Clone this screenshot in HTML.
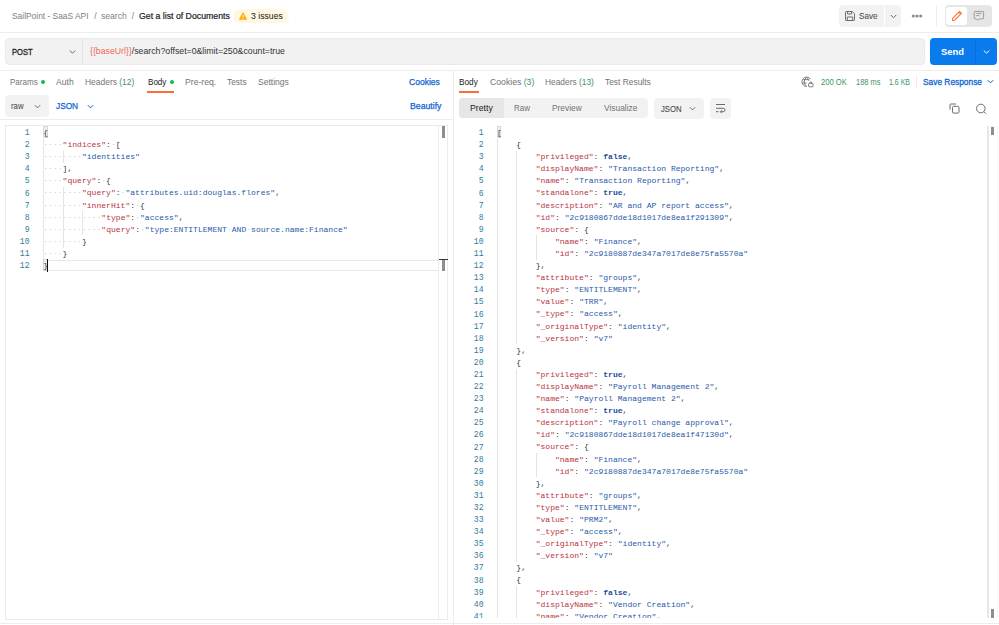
<!DOCTYPE html>
<html><head><meta charset="utf-8">
<style>
*{box-sizing:border-box;margin:0;padding:0}
html,body{width:999px;height:625px;overflow:hidden;background:#fff;font-family:"Liberation Sans",sans-serif;color:#212121}
.a{position:absolute}
.t{position:absolute;white-space:nowrap;line-height:1}
.vl{position:absolute;width:1px;background:#ededed}
.code{font-family:"Liberation Mono",monospace;font-size:8.05px;line-height:12.1px;white-space:pre}
.ln{position:absolute;white-space:pre;text-align:right;color:#2c7e9c;font-family:"Liberation Mono",monospace;font-size:9px;line-height:12.1px;transform:scaleX(0.9);transform-origin:100% 0;padding-top:0.6px}
.k{color:#b83340}
.s{color:#2a5aa8}
.b{color:#1d4f9c;font-weight:bold}
.p{color:#3a3a3a}
i{font-style:normal;color:#c9c9c9}
</style></head><body>
<div class="t" style="left:12.30px;top:11.72px;font-size:8.6px;color:#808080;transform:scaleX(0.9767);transform-origin:0 0">SailPoint - SaaS API</div>
<div class="t" style="left:94.30px;top:11.72px;font-size:8.6px;color:#808080">/</div>
<div class="t" style="left:100.60px;top:11.72px;font-size:8.6px;color:#808080;transform:scaleX(0.9994);transform-origin:0 0">search</div>
<div class="t" style="left:131.80px;top:11.72px;font-size:8.6px;color:#808080">/</div>
<div class="t" style="left:138.50px;top:11.72px;font-size:8.6px;color:#212121;-webkit-text-stroke:0.2px #212121;transform:scaleX(1.0166);transform-origin:0 0">Get a list of Documents</div>
<div class="a" style="left:233px;top:9.2px;width:55.5px;height:13.6px;background:#fff7e2;border-radius:7px"></div>
<svg class="a" style="left:239px;top:11.5px" width="8" height="8" viewBox="0 0 8 8"><path d="M4 0.6 L7.7 7.4 L0.3 7.4 Z" fill="#ffab00" stroke="#ffab00" stroke-width="0.6" stroke-linejoin="round"/><rect x="3.55" y="2.9" width="0.9" height="2.4" fill="#fff"/><rect x="3.55" y="5.9" width="0.9" height="0.9" fill="#fff"/></svg>
<div class="t" style="left:250.50px;top:11.72px;font-size:8.6px;color:#2a2a2a;-webkit-text-stroke:0.06px #2a2a2a;transform:scaleX(1.0087);transform-origin:0 0">3 issues</div>
<div class="a" style="left:838.5px;top:5px;width:45.5px;height:21.5px;background:#f2f2f2;border-radius:4px 0 0 4px"></div>
<div class="a" style="left:885px;top:5px;width:15.5px;height:21.5px;background:#f2f2f2;border-radius:0 4px 4px 0"></div>
<div class="t" style="left:858.50px;top:11.85px;font-size:8.8px;color:#555555;-webkit-text-stroke:0.12px #555555;transform:scaleX(0.9277);transform-origin:0 0">Save</div>
<div class="a" style="left:936px;top:5px;width:1px;height:21.5px;background:#ededed"></div>
<div class="a" style="left:944.5px;top:5px;width:47px;height:21.5px;background:#e6e6e6;border-radius:4px"></div>
<div class="a" style="left:945.8px;top:6.5px;width:21.5px;height:18.6px;background:#ffffff;border-radius:3px"></div>
<div class="a" style="left:0px;top:32px;width:999px;height:1px;background:#ededed"></div>
<div class="a" style="left:5px;top:38px;width:919.5px;height:26.5px;background:#f2f2f2;border-radius:4px;border:1px solid #e9e9e9"></div>
<div class="a" style="left:82px;top:39px;width:1px;height:24.5px;background:#e3e3e3"></div>
<div class="t" style="left:12.30px;top:47.72px;font-size:8.6px;color:#212121;-webkit-text-stroke:0.3px #212121;transform:scaleX(0.8820);transform-origin:0 0">POST</div>
<div class="t" style="left:89.70px;top:47.32px;font-size:8.6px;color:#333333;transform:scaleX(1.0173);transform-origin:0 0"><span style="color:#ee6a55">{{baseUrl}}</span>/search?offset=0&amp;limit=250&amp;count=true</div>
<div class="a" style="left:930px;top:38px;width:67px;height:27px;background:#097bed;border-radius:4px"></div>
<div class="a" style="left:975px;top:38px;width:1px;height:27px;background:#0a70dc"></div>
<div class="t" style="left:941.00px;top:47.07px;font-size:9.6px;color:#ffffff;font-weight:bold;transform:scaleX(0.9748);transform-origin:0 0">Send</div>
<div class="a" style="left:0px;top:70px;width:999px;height:1px;background:#ededed"></div>
<div class="t" style="left:10.10px;top:77.83px;font-size:9.3px;color:#737373;transform:scaleX(0.8647);transform-origin:0 0">Params</div>
<div class="a" style="left:41px;top:79.8px;width:4px;height:4px;border-radius:50%;background:#0cbb52"></div>
<div class="t" style="left:56.10px;top:77.83px;font-size:9.3px;color:#737373;transform:scaleX(0.9285);transform-origin:0 0">Auth</div>
<div class="t" style="left:84.60px;top:77.83px;font-size:9.3px;color:#737373;transform:scaleX(0.9084);transform-origin:0 0">Headers <span style="color:#3a9566">(12)</span></div>
<div class="t" style="left:147.70px;top:77.83px;font-size:9.3px;color:#212121;transform:scaleX(0.8681);transform-origin:0 0">Body</div>
<div class="a" style="left:170.3px;top:79.8px;width:4px;height:4px;border-radius:50%;background:#0cbb52"></div>
<div class="t" style="left:184.60px;top:77.83px;font-size:9.3px;color:#737373;transform:scaleX(0.9303);transform-origin:0 0">Pre-req.</div>
<div class="t" style="left:227.00px;top:77.83px;font-size:9.3px;color:#737373;transform:scaleX(0.9025);transform-origin:0 0">Tests</div>
<div class="t" style="left:257.80px;top:77.83px;font-size:9.3px;color:#737373;transform:scaleX(0.9192);transform-origin:0 0">Settings</div>
<div class="a" style="left:147px;top:91px;width:27px;height:2px;background:#ff6c37"></div>
<div class="t" style="left:408.80px;top:77.83px;font-size:9.3px;color:#0b64d0;-webkit-text-stroke:0.25px #0b64d0;transform:scaleX(0.9193);transform-origin:0 0">Cookies</div>
<div class="a" style="left:5px;top:95px;width:44px;height:21.5px;background:#f2f2f2;border-radius:4px"></div>
<div class="t" style="left:11.20px;top:102.12px;font-size:8.6px;color:#3a3a3a;transform:scaleX(0.9084);transform-origin:0 0">raw</div>
<div class="t" style="left:55.90px;top:101.83px;font-size:9.3px;color:#0b64d0;-webkit-text-stroke:0.25px #0b64d0;transform:scaleX(0.8887);transform-origin:0 0">JSON</div>
<div class="t" style="left:409.70px;top:101.63px;font-size:9.3px;color:#0b64d0;-webkit-text-stroke:0.25px #0b64d0;transform:scaleX(0.9368);transform-origin:0 0">Beautify</div>
<div class="a" style="left:0px;top:119.4px;width:453px;height:1px;background:#ededed"></div>
<div class="a" style="left:453px;top:70px;width:1px;height:555px;background:#ededed"></div>
<div class="t" style="left:459.30px;top:77.83px;font-size:9.3px;color:#212121;transform:scaleX(0.8866);transform-origin:0 0">Body</div>
<div class="t" style="left:489.50px;top:77.83px;font-size:9.3px;color:#737373;transform:scaleX(0.9318);transform-origin:0 0">Cookies <span style="color:#3a9566">(3)</span></div>
<div class="t" style="left:544.90px;top:77.83px;font-size:9.3px;color:#737373;transform:scaleX(0.9010);transform-origin:0 0">Headers <span style="color:#3a9566">(13)</span></div>
<div class="t" style="left:605.30px;top:77.83px;font-size:9.3px;color:#737373;transform:scaleX(0.9022);transform-origin:0 0">Test Results</div>
<div class="a" style="left:459px;top:91px;width:20px;height:2px;background:#ff6c37"></div>
<div class="t" style="left:821.00px;top:77.83px;font-size:9.3px;color:#3a9566;transform:scaleX(0.8198);transform-origin:0 0">200 OK</div>
<div class="t" style="left:855.70px;top:77.83px;font-size:9.3px;color:#3a9566;transform:scaleX(0.8009);transform-origin:0 0">188 ms</div>
<div class="t" style="left:889.00px;top:77.83px;font-size:9.3px;color:#3a9566;transform:scaleX(0.7507);transform-origin:0 0">1.6 KB</div>
<div class="a" style="left:916px;top:75px;width:1px;height:13px;background:#ededed"></div>
<div class="t" style="left:923.00px;top:77.83px;font-size:9.3px;color:#0b64d0;-webkit-text-stroke:0.3px #0b64d0;transform:scaleX(0.8982);transform-origin:0 0">Save Response</div>
<div class="a" style="left:459px;top:98px;width:189px;height:20px;background:#f2f2f2;border-radius:4px"></div>
<div class="a" style="left:459px;top:98px;width:44.5px;height:20px;background:#e6e6e6;border-radius:4px 0 0 4px"></div>
<div class="t" style="left:469.70px;top:104.23px;font-size:9.3px;color:#212121;transform:scaleX(0.9378);transform-origin:0 0">Pretty</div>
<div class="t" style="left:514.40px;top:104.23px;font-size:9.3px;color:#737373;transform:scaleX(0.8579);transform-origin:0 0">Raw</div>
<div class="t" style="left:552.30px;top:104.23px;font-size:9.3px;color:#737373;transform:scaleX(0.8995);transform-origin:0 0">Preview</div>
<div class="t" style="left:604.00px;top:104.23px;font-size:9.3px;color:#737373;transform:scaleX(0.9032);transform-origin:0 0">Visualize</div>
<div class="a" style="left:653.8px;top:98.2px;width:50.5px;height:21px;background:#f2f2f2;border-radius:4px"></div>
<div class="t" style="left:660.60px;top:104.53px;font-size:9.3px;color:#4a4a4a;-webkit-text-stroke:0.12px #4a4a4a;transform:scaleX(0.8264);transform-origin:0 0">JSON</div>
<div class="a" style="left:710.2px;top:98.2px;width:20.7px;height:21px;background:#f2f2f2;border-radius:4px"></div>
<!--ED-->
<div class="a" style="left:4.6px;top:124.8px;width:443.9px;height:494.9px;border:1px solid #ebebeb"></div>
<div class="a" style="left:437.9px;top:125.8px;width:10px;height:493px;border-left:1px solid #ebebeb"></div>
<div class="a" style="left:43.5px;top:259.5px;width:395px;height:11.5px;border-top:1px solid #e8e8e8;border-bottom:1px solid #e8e8e8"></div>
<div class="vl" style="left:43.4px;top:138.60px;height:121.00px;background:#e3e3e3"></div>
<div class="vl" style="left:62.7px;top:150.70px;height:12.10px;background:#e3e3e3"></div>
<div class="vl" style="left:62.7px;top:187.00px;height:60.50px;background:#e3e3e3"></div>
<div class="vl" style="left:82.0px;top:211.20px;height:24.20px;background:#e3e3e3"></div>
<div class="a" style="left:43.3px;top:126.3px;width:4.3px;height:12px;background:#eef2ee;border:1px solid #d6d6d6"></div>
<div class="a" style="left:43.3px;top:259.3px;width:4.3px;height:11.5px;background:#eef2ee;border:1px solid #d6d6d6"></div>
<div class="ln" style="left:5px;top:126.5px;width:24.5px">1
2
3
4
5
6
7
8
9
10
11
12</div>
<div class="a code ws-left" style="left:43.2px;top:127px"><span class="p">{</span>
<i>·</i><i>·</i><i>·</i><i>·</i><span class="k">&quot;indices&quot;</span><span class="p">:</span><i>·</i><span class="p">[</span>
<i>·</i><i>·</i><i>·</i><i>·</i><i>·</i><i>·</i><i>·</i><i>·</i><span class="s">&quot;identities&quot;</span>
<i>·</i><i>·</i><i>·</i><i>·</i><span class="p">]</span><span class="p">,</span>
<i>·</i><i>·</i><i>·</i><i>·</i><span class="k">&quot;query&quot;</span><span class="p">:</span><i>·</i><span class="p">{</span>
<i>·</i><i>·</i><i>·</i><i>·</i><i>·</i><i>·</i><i>·</i><i>·</i><span class="k">&quot;query&quot;</span><span class="p">:</span><i>·</i><span class="s">&quot;attributes.uid:douglas.flores&quot;</span><span class="p">,</span>
<i>·</i><i>·</i><i>·</i><i>·</i><i>·</i><i>·</i><i>·</i><i>·</i><span class="k">&quot;innerHit&quot;</span><span class="p">:</span><i>·</i><span class="p">{</span>
<i>·</i><i>·</i><i>·</i><i>·</i><i>·</i><i>·</i><i>·</i><i>·</i><i>·</i><i>·</i><i>·</i><i>·</i><span class="k">&quot;type&quot;</span><span class="p">:</span><i>·</i><span class="s">&quot;access&quot;</span><span class="p">,</span>
<i>·</i><i>·</i><i>·</i><i>·</i><i>·</i><i>·</i><i>·</i><i>·</i><i>·</i><i>·</i><i>·</i><i>·</i><span class="k">&quot;query&quot;</span><span class="p">:</span><i>·</i><span class="s">&quot;type:ENTITLEMENT<i>·</i>AND<i>·</i>source.name:Finance&quot;</span>
<i>·</i><i>·</i><i>·</i><i>·</i><i>·</i><i>·</i><i>·</i><i>·</i><span class="p">}</span>
<i>·</i><i>·</i><i>·</i><i>·</i><span class="p">}</span>
<span class="p">}</span></div>
<div class="a" style="left:47.2px;top:259px;width:1px;height:12.5px;background:#111"></div>
<div class="a" style="left:442px;top:126.3px;width:3px;height:11.6px;background:#8e8e8e"></div>
<div class="a" style="left:442px;top:260px;width:3px;height:11px;background:#8e8e8e"></div>
<div class="a" style="left:438.9px;top:259px;width:9px;height:1.3px;background:#333"></div>
<div class="a" style="left:987.4px;top:126px;width:1.3px;height:492px;background:#e6e6e6"></div>
<div class="a" style="left:991px;top:126.2px;width:3px;height:8.9px;background:#8e8e8e"></div>
<div class="a" style="left:987.5px;top:126px;width:10px;height:492px;border-right:1px solid #f6f6f6;border-top:1px solid #f6f6f6"></div>
<div class="a" style="left:991.2px;top:609px;width:3px;height:9px;background:#8e8e8e"></div>
<div class="a" style="left:455px;top:0;width:532px;height:618px;overflow:hidden"><div class="a" style="left:-455px;top:0;width:999px;height:625px">
<div class="vl" style="left:497.0px;top:138.60px;height:484.00px;background:#e3e3e3"></div>
<div class="vl" style="left:516.3px;top:150.70px;height:193.60px;background:#e3e3e3"></div>
<div class="vl" style="left:516.3px;top:368.50px;height:193.60px;background:#e3e3e3"></div>
<div class="vl" style="left:516.3px;top:586.30px;height:36.30px;background:#e3e3e3"></div>
<div class="vl" style="left:535.6px;top:235.40px;height:24.20px;background:#e3e3e3"></div>
<div class="vl" style="left:535.6px;top:453.20px;height:24.20px;background:#e3e3e3"></div>
<div class="a" style="left:496.9px;top:126.2px;width:4.6px;height:12px;background:#eef2ee;border:1px solid #d6d6d6"></div>
<div class="ln" style="left:455px;top:126.5px;width:28.5px">1
2
3
4
5
6
7
8
9
10
11
12
13
14
15
16
17
18
19
20
21
22
23
24
25
26
27
28
29
30
31
32
33
34
35
36
37
38
39
40
41</div>
<div class="a code" style="left:497px;top:127px"><span class="p">[</span>
    <span class="p">{</span>
        <span class="k">&quot;privileged&quot;</span><span class="p">:</span> <span class="b">false</span><span class="p">,</span>
        <span class="k">&quot;displayName&quot;</span><span class="p">:</span> <span class="s">&quot;Transaction Reporting&quot;</span><span class="p">,</span>
        <span class="k">&quot;name&quot;</span><span class="p">:</span> <span class="s">&quot;Transaction Reporting&quot;</span><span class="p">,</span>
        <span class="k">&quot;standalone&quot;</span><span class="p">:</span> <span class="b">true</span><span class="p">,</span>
        <span class="k">&quot;description&quot;</span><span class="p">:</span> <span class="s">&quot;AR and AP report access&quot;</span><span class="p">,</span>
        <span class="k">&quot;id&quot;</span><span class="p">:</span> <span class="s">&quot;2c9180867dde18d1017de8ea1f291309&quot;</span><span class="p">,</span>
        <span class="k">&quot;source&quot;</span><span class="p">:</span> <span class="p">{</span>
            <span class="k">&quot;name&quot;</span><span class="p">:</span> <span class="s">&quot;Finance&quot;</span><span class="p">,</span>
            <span class="k">&quot;id&quot;</span><span class="p">:</span> <span class="s">&quot;2c9180887de347a7017de8e75fa5570a&quot;</span>
        <span class="p">}</span><span class="p">,</span>
        <span class="k">&quot;attribute&quot;</span><span class="p">:</span> <span class="s">&quot;groups&quot;</span><span class="p">,</span>
        <span class="k">&quot;type&quot;</span><span class="p">:</span> <span class="s">&quot;ENTITLEMENT&quot;</span><span class="p">,</span>
        <span class="k">&quot;value&quot;</span><span class="p">:</span> <span class="s">&quot;TRR&quot;</span><span class="p">,</span>
        <span class="k">&quot;_type&quot;</span><span class="p">:</span> <span class="s">&quot;access&quot;</span><span class="p">,</span>
        <span class="k">&quot;_originalType&quot;</span><span class="p">:</span> <span class="s">&quot;identity&quot;</span><span class="p">,</span>
        <span class="k">&quot;_version&quot;</span><span class="p">:</span> <span class="s">&quot;v7&quot;</span>
    <span class="p">}</span><span class="p">,</span>
    <span class="p">{</span>
        <span class="k">&quot;privileged&quot;</span><span class="p">:</span> <span class="b">true</span><span class="p">,</span>
        <span class="k">&quot;displayName&quot;</span><span class="p">:</span> <span class="s">&quot;Payroll Management 2&quot;</span><span class="p">,</span>
        <span class="k">&quot;name&quot;</span><span class="p">:</span> <span class="s">&quot;Payroll Management 2&quot;</span><span class="p">,</span>
        <span class="k">&quot;standalone&quot;</span><span class="p">:</span> <span class="b">true</span><span class="p">,</span>
        <span class="k">&quot;description&quot;</span><span class="p">:</span> <span class="s">&quot;Payroll change approval&quot;</span><span class="p">,</span>
        <span class="k">&quot;id&quot;</span><span class="p">:</span> <span class="s">&quot;2c9180867dde18d1017de8ea1f47130d&quot;</span><span class="p">,</span>
        <span class="k">&quot;source&quot;</span><span class="p">:</span> <span class="p">{</span>
            <span class="k">&quot;name&quot;</span><span class="p">:</span> <span class="s">&quot;Finance&quot;</span><span class="p">,</span>
            <span class="k">&quot;id&quot;</span><span class="p">:</span> <span class="s">&quot;2c9180887de347a7017de8e75fa5570a&quot;</span>
        <span class="p">}</span><span class="p">,</span>
        <span class="k">&quot;attribute&quot;</span><span class="p">:</span> <span class="s">&quot;groups&quot;</span><span class="p">,</span>
        <span class="k">&quot;type&quot;</span><span class="p">:</span> <span class="s">&quot;ENTITLEMENT&quot;</span><span class="p">,</span>
        <span class="k">&quot;value&quot;</span><span class="p">:</span> <span class="s">&quot;PRM2&quot;</span><span class="p">,</span>
        <span class="k">&quot;_type&quot;</span><span class="p">:</span> <span class="s">&quot;access&quot;</span><span class="p">,</span>
        <span class="k">&quot;_originalType&quot;</span><span class="p">:</span> <span class="s">&quot;identity&quot;</span><span class="p">,</span>
        <span class="k">&quot;_version&quot;</span><span class="p">:</span> <span class="s">&quot;v7&quot;</span>
    <span class="p">}</span><span class="p">,</span>
    <span class="p">{</span>
        <span class="k">&quot;privileged&quot;</span><span class="p">:</span> <span class="b">false</span><span class="p">,</span>
        <span class="k">&quot;displayName&quot;</span><span class="p">:</span> <span class="s">&quot;Vendor Creation&quot;</span><span class="p">,</span>
        <span class="k">&quot;name&quot;</span><span class="p">:</span> <span class="s">&quot;Vendor Creation&quot;</span><span class="p">,</span></div>
</div></div>
<!--/ED-->
<div class="a" style="left:0px;top:623px;width:999px;height:1px;background:#ededed"></div>
<!--ICONS-->
<svg class="a" style="left:845px;top:11px" width="10" height="10" viewBox="0 0 10 10" fill="none" stroke="#6b6b6b" stroke-width="1"><path d="M0.5 1.2 Q0.5 0.5 1.2 0.5 H7.3 L9.5 2.7 V8.8 Q9.5 9.5 8.8 9.5 H1.2 Q0.5 9.5 0.5 8.8 Z"/><path d="M2.6 0.5 V3 H6.6 V0.5"/><path d="M2.3 9.5 V6 H7.7 V9.5"/></svg>
<svg class="a" style="left:889.5px;top:13.5px" width="7" height="5" viewBox="0 0 7 5" fill="none" stroke="#6b6b6b" stroke-width="1"><path d="M0.8 1 L3.5 3.8 L6.2 1"/></svg>
<svg class="a" style="left:911px;top:13px" width="12" height="6" viewBox="0 0 12 6" fill="#8f8f8f"><circle cx="2.3" cy="3" r="1.6"/><circle cx="6" cy="3" r="1.6"/><circle cx="9.7" cy="3" r="1.6"/></svg>
<svg class="a" style="left:951px;top:10px" width="12" height="12" viewBox="0 0 12 12" fill="none" stroke="#ff6c37" stroke-width="1.1" stroke-linejoin="round"><path d="M8.6 1.4 L10.5 3.3 L3.6 10.2 L1.4 10.5 L1.7 8.3 Z M7.6 2.4 L9.5 4.3"/></svg>
<svg class="a" style="left:973px;top:10px" width="12" height="12" viewBox="0 0 12 12" fill="none" stroke="#999999" stroke-width="0.95"><path d="M1.9 1.4 H9.9 Q10.6 1.4 10.6 2.1 V8.2 Q10.6 8.9 9.9 8.9 H5.9 L4.6 10.3 L3.3 8.9 H1.9 Q1.2 8.9 1.2 8.2 V2.1 Q1.2 1.4 1.9 1.4 Z"/><path d="M3.3 3.4 H8.5 M3.3 5.6 H6.4"/></svg>
<svg class="a" style="left:983px;top:49px" width="7" height="6" viewBox="0 0 7 6" fill="none" stroke="#fff" stroke-width="1"><path d="M0.8 1.5 L3.5 4.2 L6.2 1.5"/></svg>
<svg class="a" style="left:68.5px;top:49px" width="7" height="6" viewBox="0 0 7 6" fill="none" stroke="#6b6b6b" stroke-width="1"><path d="M0.8 1.5 L3.5 4.2 L6.2 1.5"/></svg>
<svg class="a" style="left:33.5px;top:103.5px" width="7" height="6" viewBox="0 0 7 6" fill="none" stroke="#6b6b6b" stroke-width="1"><path d="M0.8 1.2 L3.5 3.9 L6.2 1.2"/></svg>
<svg class="a" style="left:86.5px;top:103.5px" width="7" height="6" viewBox="0 0 7 6" fill="none" stroke="#0265d2" stroke-width="1"><path d="M0.8 1.2 L3.5 3.9 L6.2 1.2"/></svg>
<svg class="a" style="left:689px;top:106px" width="7" height="6" viewBox="0 0 7 6" fill="none" stroke="#6b6b6b" stroke-width="1"><path d="M0.8 1.2 L3.5 3.9 L6.2 1.2"/></svg>
<svg class="a" style="left:987px;top:79px" width="7" height="6" viewBox="0 0 7 6" fill="none" stroke="#0265d2" stroke-width="1"><path d="M0.8 1.2 L3.5 3.9 L6.2 1.2"/></svg>
<svg class="a" style="left:715px;top:103px" width="11" height="11" viewBox="0 0 11 11" fill="none" stroke="#6b6b6b" stroke-width="1"><path d="M1 1.5 H10 M1 5.3 H8.3 Q10 5.3 10 7 Q10 8.7 8.3 8.7 H5.5 M6.8 7.3 L5.4 8.7 L6.8 10.1 M1 8.7 H3.5"/></svg>
<svg class="a" style="left:801px;top:76px" width="13" height="12" viewBox="0 0 13 12" fill="none" stroke="#6e6e6e" stroke-width="0.9"><path d="M9.6 3.2 A4.7 4.7 0 1 0 5.6 10.5"/><path d="M2.2 3.6 H8 M1.6 7 H5.6 M5.5 1.1 Q3.2 3.4 3.2 5.8 Q3.2 8.2 5.5 10.5 M5.5 1.1 Q7.4 2.9 7.9 4.8"/><rect x="7.6" y="7.4" width="4.4" height="3.4" rx="0.7"/><path d="M8.7 7.4 V6.6 Q9.8 5.2 10.9 6.6 V7.4"/></svg>
<svg class="a" style="left:948.5px;top:103px" width="11" height="11" viewBox="0 0 11 11" fill="none" stroke="#6b6b6b" stroke-width="1"><path d="M1 6.7 V1.8 Q1 1 1.8 1 H7"/><rect x="3.5" y="3.3" width="6.5" height="6.8" rx="1.2"/></svg>
<svg class="a" style="left:974.5px;top:102.5px" width="12" height="12" viewBox="0 0 12 12" fill="none" stroke="#6b6b6b" stroke-width="1"><circle cx="5.8" cy="5.5" r="4.3"/><path d="M8.9 8.6 L11 10.8"/></svg>
<!--/ICONS-->
</body></html>
